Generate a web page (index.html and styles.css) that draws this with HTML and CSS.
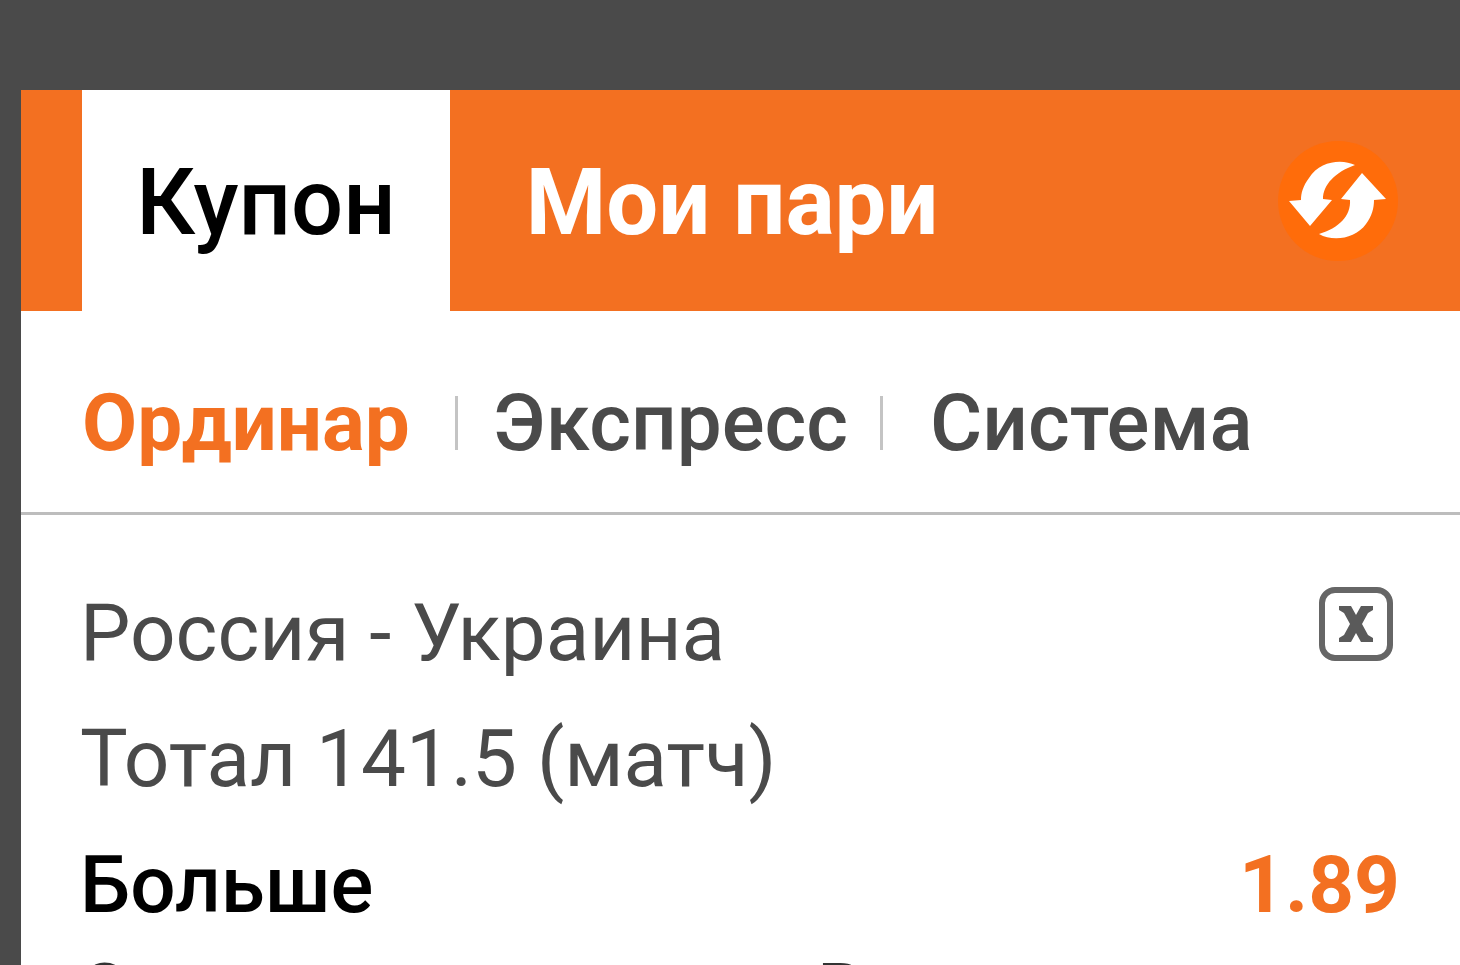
FILE: index.html
```html
<!DOCTYPE html>
<html lang="ru">
<head>
<meta charset="utf-8">
<title>Купон</title>
<link rel="stylesheet" href="styles.css">
</head>
<body>
<main class="coupon">
  <header class="tabs">
    <button class="tab tab-active" type="button">Купон</button>
    <button class="tab" type="button">Мои пари</button>
    <button class="refresh" type="button" aria-label="Обновить">
      <svg class="refresh-icon" viewBox="0 0 122 122" aria-hidden="true">
        <circle class="refresh-disc" cx="61" cy="61" r="60"/>
        <path d="M78 25C66 19 43 20 32 38C26 46 24 53 24 60L12 61L33 86L55 60L46 59C46 45 58 32 78 25Z"/>
        <path d="M85 33L64 59L73 60C74 76 62 88 42 94C56 102 78 99 89 84C95 76 97 68 97 60L109 59Z"/>
      </svg>
    </button>
  </header>
  <nav class="modes">
    <a class="mode mode-active" href="#single">Ординар</a>
    <span class="divider"></span>
    <a class="mode mode-middle" href="#express">Экспресс</a>
    <span class="divider"></span>
    <a class="mode mode-last" href="#system">Система</a>
  </nav>
  <section class="bet">
    <div class="bet-row">
      <span class="bet-info">Россия - Украина</span>
      <button class="remove" type="button" aria-label="Удалить">
        <svg class="remove-icon" viewBox="0 0 76 76" aria-hidden="true">
          <rect class="remove-frame" x="4" y="4" width="68" height="68" rx="13"/>
          <path d="M21 20H33L38 29L43 20H55V24L50 27L44 38L50 49L55 52V56H43L38 47L33 56H21V52L26 49L32 38L26 27L21 24Z"/>
        </svg>
      </button>
    </div>
    <div class="bet-row"><span class="bet-info">Тотал 141.5 (матч)</span></div>
    <div class="bet-row"><strong class="bet-pick">Больше</strong><strong class="bet-odds">1.89</strong></div>
    <div class="bet-sums"><span>Сумма</span><span>Выплата</span></div>
  </section>
</main>
</body>
</html>
```
FILE: styles.css
```css
* { box-sizing: border-box; }
body {
  margin: 0;
  height: 100vh;
  overflow: hidden;
  padding: 90px 0 0 21px;
  background: #4a4a4a;
  font-family: Roboto, "Liberation Sans", sans-serif;
  font-size: 80px;
}
button {
  border: 0;
  padding: 0;
  background: none;
  font: inherit;
  cursor: pointer;
}
.coupon { min-height: 100%; background: #fff; color: #4a4a4a; }
.tabs {
  display: flex;
  align-items: stretch;
  padding: 0 61px;
  height: 221px;
  background: #f37021;
}
.tab {
  padding: 4px 76px 0;
  color: #fff;
  font-size: 92px;
  font-weight: 700;
  white-space: nowrap;
}
.tab-active { padding: 4px 54px 0; background: #fff; color: #000; font-weight: 500; }
.refresh { margin-left: auto; display: flex; align-items: center; }
.refresh-icon { width: 122px; height: 122px; fill: #fff; }
.refresh-disc { fill: #ff6c0a; }
.modes {
  display: flex;
  align-items: center;
  height: 204px;
  padding: 22px 61px 0;
  border-bottom: 3px solid #bdbdbd;
}
.mode {
  margin-right: 45px;
  color: #4a4a4a;
  font-weight: 500;
  text-decoration: none;
  white-space: nowrap;
}
.mode-active { color: #f37021; font-weight: 700; }
.mode-middle { margin: 0 32px 0 35px; }
.mode-last { margin: 0 0 0 47px; }
.divider { width: 3px; height: 54px; background: #c4c4c4; }
.bet { padding: 55px 60px 0 59px; }
.bet-row {
  display: flex;
  justify-content: space-between;
  align-items: center;
  line-height: 126px;
}
.bet-info { font-weight: 400; color: #4a4a4a; }
.remove { display: flex; margin: 0 6px 18px 0; }
.remove-icon { width: 76px; height: 76px; fill: #5a5a5a; }
.remove-frame { fill: none; stroke: #666; stroke-width: 6; }
.bet-pick { color: #000; font-weight: 500; }
.bet-odds { color: #f37021; font-weight: 700; }
.bet-sums {
  display: grid;
  grid-template-columns: 19fr 15fr;
  color: #333;
  font-size: 72px;
  font-weight: 500;
  line-height: 86px;
}
```
